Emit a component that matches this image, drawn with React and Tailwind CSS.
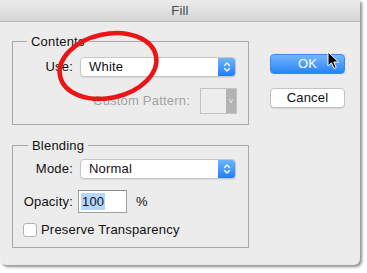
import React from "react";

const font = { fontFamily: '"Liberation Sans", Arial, sans-serif' };

function Chevrons() {
  return (
    <svg width="8" height="12" viewBox="0 0 8 12" fill="none" stroke="white" strokeWidth="1.3" strokeLinecap="round" strokeLinejoin="round">
      <path d="M1.5 4.5 L4 2 L6.5 4.5" />
      <path d="M1.5 7.5 L4 10 L6.5 7.5" />
    </svg>
  );
}

function Select({ value }) {
  return (
    <div className="flex h-[20px] w-[156px] overflow-hidden rounded-[4px] border border-[#c6c6c6] bg-white shadow-[0_1px_1px_rgba(0,0,0,0.08)]">
      <span className="flex-1 pl-[8px] text-[13px] leading-[18px] text-[#111]">{value}</span>
      <span className="flex w-[17px] items-center justify-center bg-gradient-to-b from-[#6db4fd] to-[#1b7ef9]">
        <Chevrons />
      </span>
    </div>
  );
}

export default function App() {
  return (
    <div className="relative h-[273px] w-[367px] bg-white tracking-[0.2px]" style={font}>
      <div className="relative flex h-[265px] w-[360px] flex-col overflow-hidden rounded-b-[6px] bg-[#ececec] shadow-[2px_2px_3px_rgba(0,0,0,0.45)]">
        {/* title bar */}
        <div className="flex h-[22px] items-center justify-center border-b border-[#b8b8b8] bg-gradient-to-b from-[#ebebeb] to-[#d5d5d5]">
          <span className="pt-[1px] text-[13px] text-[#4a4a4a]">Fill</span>
        </div>
        {/* body */}
        <div className="flex pl-[12px] pt-[12px]">
          <div className="flex w-[237px] flex-col">
            <fieldset className="border border-[#a9a9a9] pb-[10px] pr-[11px]">
              <legend className="ml-[14px] px-[4px] text-[13px] leading-[15px] text-[#111]">Contents</legend>
              <div className="mt-[8px] flex items-center">
                <span className="w-[60px] text-right text-[13px] leading-[20px] text-[#111]">Use:</span>
                <div className="ml-[7px]">
                  <Select value="White" />
                </div>
              </div>
              <div className="mt-[11px] flex items-center justify-end">
                <span className="text-[13px] text-[#a3a3a3]">Custom Pattern:</span>
                <div className="ml-[10px] flex h-[26px] w-[37px] border border-[#c2c2c2] bg-[#ededed]">
                  <div className="flex-1" />
                  <div className="flex w-[10px] items-center justify-center bg-[#b3b3b3] text-[8px] leading-none text-[#eee]">v</div>
                </div>
              </div>
            </fieldset>
            <fieldset className="mt-[13px] border border-[#a9a9a9] pb-[10px] pr-[11px]">
              <legend className="ml-[15px] px-[4px] text-[13px] leading-[15px] text-[#111]">Blending</legend>
              <div className="mt-[6px] flex items-center">
                <span className="w-[60px] text-right text-[13px] leading-[20px] text-[#111]">Mode:</span>
                <div className="ml-[7px]">
                  <Select value="Normal" />
                </div>
              </div>
              <div className="mt-[11px] flex items-center">
                <span className="w-[60px] text-right text-[13px] text-[#111]">Opacity:</span>
                <div className="ml-[5px] flex h-[23px] w-[49px] items-center border border-[#a0a0a0] border-t-[#8e8e8e] bg-white pl-[2px]">
                  <span className="bg-[#b4d6fc] px-[1px] text-[13px] leading-[17px] text-[#111]">100</span>
                </div>
                <span className="ml-[9px] text-[13px] text-[#111]">%</span>
              </div>
              <div className="ml-[10px] mt-[10px] flex items-center">
                <div className="h-[14px] w-[14px] rounded-[3px] border border-[#b2b2b2] bg-white" />
                <span className="ml-[4px] text-[13px] leading-[14px] text-[#111]">Preserve Transparency</span>
              </div>
            </fieldset>
          </div>
          <div className="ml-[21px] flex w-[75px] flex-col pt-[20px]">
            <button className="h-[20px] w-[75px] rounded-[4px] border border-[#3f8bec] bg-gradient-to-b from-[#74b6fd] to-[#2283f6] text-[13px] leading-[18px] text-white shadow-[0_0_1px_rgba(0,0,0,0.3)]">
              OK
            </button>
            <button className="mt-[14px] h-[20px] w-[75px] rounded-[4px] border border-[#c3c3c3] bg-white text-[13px] leading-[18px] text-[#111] shadow-[0_1px_1px_rgba(0,0,0,0.1)]">
              Cancel
            </button>
          </div>
        </div>
        {/* red annotation ellipse */}
        <svg className="pointer-events-none absolute left-0 top-0" width="360" height="265">
          <ellipse cx="108" cy="66" rx="49" ry="32" transform="rotate(-12 108 66)" fill="none" stroke="#ec1515" strokeWidth="4.5" />
        </svg>
        {/* mouse cursor */}
        <svg className="pointer-events-none absolute left-[327px] top-[51px]" width="13" height="19" viewBox="0 0 13 19">
          <path d="M1 1 L1 15 L4.5 11.8 L7 17.5 L9.2 16.5 L6.8 11 L11.5 11 Z" fill="#000" stroke="#fff" strokeWidth="1" strokeLinejoin="round" />
        </svg>
      </div>
    </div>
  );
}
